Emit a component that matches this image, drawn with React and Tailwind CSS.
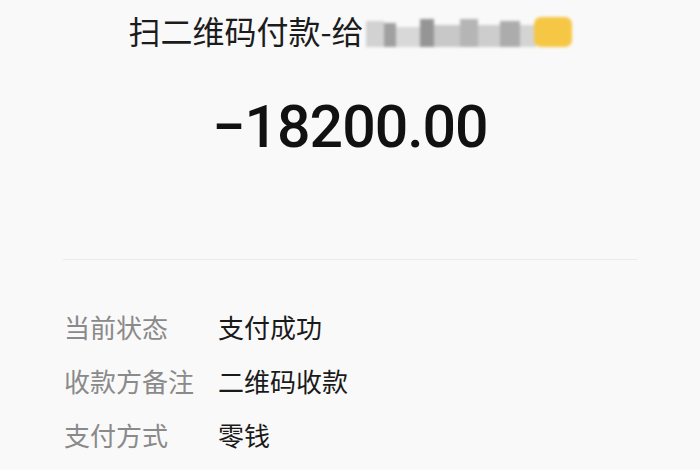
import React from 'react';

const rows = [
  { label: '当前状态', value: '支付成功' },
  { label: '收款方备注', value: '二维码收款' },
  { label: '支付方式', value: '零钱' },
];

// blurred tiles standing in for the payee name
const tiles = [
  { w: 'w-[18px]', h: 'h-[26px]', c: 'bg-[#d2d2d2]' },
  { w: 'w-[12px]', h: 'h-[24px]', c: 'bg-[#a0a0a0]' },
  { w: 'w-[24px]', h: 'h-[20px]', c: 'bg-[#d8d8d8]' },
  { w: 'w-[14px]', h: 'h-[28px]', c: 'bg-[#959595]' },
  { w: 'w-[26px]', h: 'h-[22px]', c: 'bg-[#c8c8c8]' },
  { w: 'w-[18px]', h: 'h-[28px]', c: 'bg-[#b5b5b5]' },
  { w: 'w-[22px]', h: 'h-[22px]', c: 'bg-[#cdcdcd]' },
  { w: 'w-[20px]', h: 'h-[26px]', c: 'bg-[#acacac]' },
  { w: 'w-[16px]', h: 'h-[22px]', c: 'bg-[#d4d4d4]' },
];

const Mosaic = () => (
  <div className="flex items-end h-[34px] ml-[2px] blur-[1.5px]">
    {tiles.map((t, i) => (
      <div key={i} className={`${t.w} ${t.h} ${t.c}`} />
    ))}
    <div className="w-[38px] h-[30px] ml-[-2px] rounded-[7px] bg-[#f6c744]" />
  </div>
);

export default function App() {
  return (
    <div
      className="w-[700px] h-[470px] bg-[#f9f9f9] overflow-hidden"
      style={{ fontFamily: '"Noto Sans CJK SC", "Noto Sans", sans-serif' }}
    >
      {/* Title */}
      <div className="flex justify-center items-center pt-[10px] h-[50px]">
        <span className="text-[32px] leading-[40px] text-[#1c1c1c]">扫二维码付款-给</span>
        <Mosaic />
      </div>

      {/* Amount */}
      <div
        className="mt-[42px] h-[70px] flex justify-center items-center text-[59px] leading-[70px] font-medium text-[#111] tracking-[-1px]"
        style={{ fontFamily: 'Roboto, "Liberation Sans", sans-serif' }}
      >
        −18200.00
      </div>

      {/* Divider */}
      <div className="mt-[97px] mx-[63px] h-px bg-[#ebebeb]" />

      {/* Details */}
      <div className="mt-[39px] px-[64px] flex flex-col">
        {rows.map((r) => (
          <div key={r.label} className="flex h-[54px] items-center text-[26px]">
            <span className="w-[154px] text-[#8a8a8a]">{r.label}</span>
            <span className="text-[#1a1a1a]">{r.value}</span>
          </div>
        ))}
      </div>
    </div>
  );
}
